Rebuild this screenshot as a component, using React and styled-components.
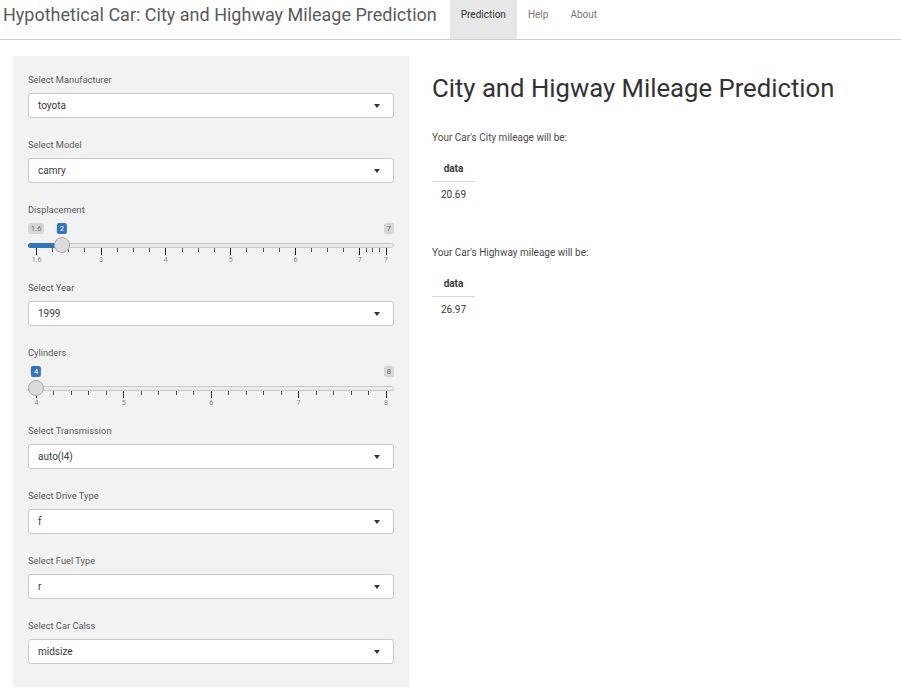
import React from "react";
import styled, { createGlobalStyle } from "styled-components";

const GlobalStyle = createGlobalStyle`
  html, body { margin: 0; padding: 0; background: #fff; }
  body { font-family: Roboto, "Liberation Sans", Arial, sans-serif; color: #333; }
  * { box-sizing: border-box; }
`;

const NavBar = styled.div`
  height: 40px;
  display: flex;
  align-items: flex-start;
  border-bottom: 1px solid #cfcfcf;
  background: #fff;
`;
const Brand = styled.div`
  padding: 4px 0 0 3px;
  font-size: 18px;
  line-height: 22px;
  color: #5a5a5a;
  margin-right: 13px;
`;
const NavItem = styled.div`
  height: 39px;
  padding: 9px 11px 0;
  font-size: 10px;
  line-height: 12px;
  color: ${(p) => (p.$active ? "#333" : "#777")};
  background: ${(p) => (p.$active ? "#e7e7e7" : "transparent")};
`;

const Page = styled.div`
  display: flex;
  align-items: flex-start;
  padding: 16px 13px 0;
  gap: 23px;
`;
const Sidebar = styled.div`
  width: 396px;
  flex-shrink: 0;
  background: #f2f2f2;
  padding: 17px 15px 40px;
`;
const Group = styled.div`
  margin-bottom: ${(p) => (p.$slider ? "15px" : "20px")};
`;
const Label = styled.div`
  font-size: 9.3px;
  line-height: 14px;
  color: #5c5c5c;
  margin-bottom: ${(p) => (p.$slider ? "0" : "6px")};
`;
const SelectBox = styled.div`
  height: 25px;
  background: #fff;
  border: 1px solid #c8c8c8;
  border-radius: 3px;
  display: flex;
  align-items: center;
  padding: 0 13px 0 9px;
  font-size: 10px;
  color: #3a3a3a;
`;
const SelectText = styled.span`
  flex: 1;
`;
const Caret = styled.span`
  width: 0;
  height: 0;
  border-left: 3.5px solid transparent;
  border-right: 3.5px solid transparent;
  border-top: 4px solid #333;
`;

const SliderWrap = styled.div`
  position: relative;
  height: 49px;
`;
const Track = styled.div`
  position: absolute;
  left: 0;
  right: 0;
  top: 26px;
  height: 5px;
  background: #ececec;
  border: 1px solid #c9c9c9;
  border-radius: 3px;
`;
const Fill = styled.div`
  position: absolute;
  left: 0;
  top: 26px;
  height: 5px;
  background: #3274c0;
  border-radius: 3px 0 0 3px;
`;
const Handle = styled.div`
  position: absolute;
  top: 20px;
  width: 16px;
  height: 16px;
  margin-left: -8px;
  border-radius: 50%;
  background: #dcdcdc;
  border: 1px solid #aaa;
`;
const Badge = styled.div`
  position: absolute;
  top: 6px;
  height: 11px;
  padding: 0 3px;
  border-radius: 2px;
  font-size: 7.5px;
  line-height: 11px;
  color: ${(p) => (p.$blue ? "#fff" : "#666")};
  background: ${(p) => (p.$blue ? "#3274c0" : "#d6d6d6")};
`;
const Tick = styled.div`
  position: absolute;
  top: 31px;
  width: 1px;
  height: ${(p) => (p.$major ? "7px" : "4px")};
  background: ${(p) => (p.$major ? "#222" : "#555")};
`;
const TickLabel = styled.div`
  position: absolute;
  top: 39px;
  width: 20px;
  margin-left: -10px;
  text-align: center;
  font-size: 7px;
  line-height: 9px;
  color: #888;
`;

const Main = styled.div`
  flex: 1;
  padding-top: 16px;
`;
const Heading = styled.h2`
  margin: 0 0 27px;
  font-size: 25.7px;
  line-height: 32px;
  font-weight: 400;
  color: #333;
`;
const Text = styled.div`
  font-size: 10px;
  line-height: 14px;
  color: #4a4a4a;
  margin-bottom: 18px;
`;
const Table = styled.table`
  border-collapse: collapse;
  font-size: 10px;
  color: #3a3a3a;
  margin-bottom: 44px;
`;
const Th = styled.th`
  width: 43px;
  padding: 0 0 6px;
  line-height: 12px;
  font-weight: 700;
  text-align: center;
  border-bottom: 1px solid #d8d8d8;
`;
const Td = styled.td`
  padding: 6px 0 0;
  line-height: 14px;
  text-align: center;
`;

function Select({ label, value }) {
  return (
    <Group>
      <Label>{label}</Label>
      <SelectBox>
        <SelectText>{value}</SelectText>
        <Caret />
      </SelectBox>
    </Group>
  );
}

// grid runs from 8px to 357.5px inside the slider
const GRID_L = 8;
const GRID_R = 357.5;

function Slider({ label, min, max, value, majors, minors, showMin }) {
  const pos = GRID_L + ((value - min) / (max - min)) * (GRID_R - GRID_L);
  const ticks = [];
  majors.forEach((m, i) => {
    ticks.push(<Tick key={"M" + i} $major style={{ left: m.x }} />);
    ticks.push(<TickLabel key={"L" + i} style={{ left: m.x + 0.5 }}>{m.label}</TickLabel>);
    const next = majors[i + 1];
    if (next) {
      for (let k = 1; k < minors; k++) {
        const x = m.x + ((next.x - m.x) * k) / minors;
        ticks.push(<Tick key={"m" + i + "-" + k} style={{ left: x }} />);
      }
    }
  });
  return (
    <Group $slider>
      <Label $slider>{label}</Label>
      <SliderWrap>
        <Track />
        <Fill style={{ width: pos }} />
        {ticks}
        {showMin && <Badge style={{ left: 0 }}>{min}</Badge>}
        <Badge style={{ right: 0 }}>{max}</Badge>
        <Badge $blue style={{ left: pos, transform: "translateX(-50%)" }}>{value}</Badge>
        <Handle style={{ left: pos }} />
      </SliderWrap>
    </Group>
  );
}

const dispMajors = [
  { x: 8, label: "1.6" },
  { x: 72.5, label: "3" },
  { x: 137.3, label: "4" },
  { x: 202.1, label: "5" },
  { x: 266.9, label: "6" },
  { x: 331.3, label: "7" },
  { x: 357.5, label: "7" },
];
const cylMajors = [
  { x: 8, label: "4" },
  { x: 95.3, label: "5" },
  { x: 182.6, label: "6" },
  { x: 270, label: "7" },
  { x: 357.5, label: "8" },
];

export default function App() {
  return (
    <>
      <GlobalStyle />
      <NavBar>
        <Brand>Hypothetical Car: City and Highway Mileage Prediction</Brand>
        <NavItem $active>Prediction</NavItem>
        <NavItem>Help</NavItem>
        <NavItem>About</NavItem>
      </NavBar>
      <Page>
        <Sidebar>
          <Select label="Select Manufacturer" value="toyota" />
          <Select label="Select Model" value="camry" />
          <Slider label="Displacement" min={1.6} max={7} value={2} majors={dispMajors} minors={4} showMin />
          <Select label="Select Year" value="1999" />
          <Slider label="Cylinders" min={4} max={8} value={4} majors={cylMajors} minors={5} />
          <Select label="Select Transmission" value="auto(l4)" />
          <Select label="Select Drive Type" value="f" />
          <Select label="Select Fuel Type" value="r" />
          <Select label="Select Car Calss" value="midsize" />
        </Sidebar>
        <Main>
          <Heading>City and Higway Mileage Prediction</Heading>
          <Text>Your Car's City mileage will be:</Text>
          <Table>
            <thead><tr><Th>data</Th></tr></thead>
            <tbody><tr><Td>20.69</Td></tr></tbody>
          </Table>
          <Text>Your Car's Highway mileage will be:</Text>
          <Table>
            <thead><tr><Th>data</Th></tr></thead>
            <tbody><tr><Td>26.97</Td></tr></tbody>
          </Table>
        </Main>
      </Page>
    </>
  );
}
